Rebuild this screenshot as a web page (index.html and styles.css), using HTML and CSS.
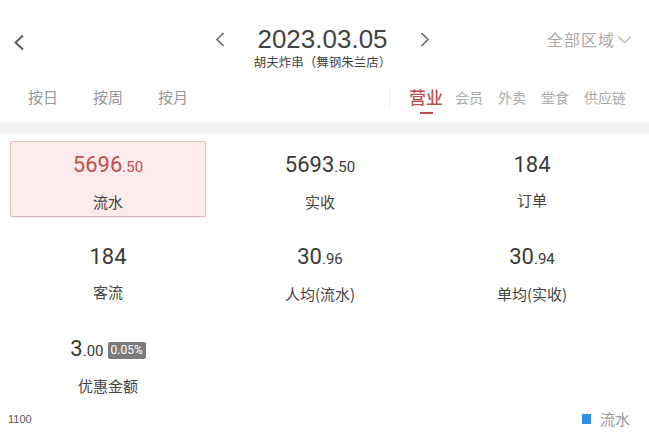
FILE: index.html
```html
<!DOCTYPE html>
<html lang="zh-CN">
<head>
    <meta charset="UTF-8">
    <meta name="viewport" content="width=device-width, initial-scale=1.0">
    <title>营业数据</title>
    <link rel="stylesheet" href="styles.css">
</head>
<body>
    <div class="topbar">
        <div class="back">
            <svg width="12" height="17" viewBox="0 0 12 17"><path d="M10 1.5 L2.5 8.5 L10 15.5" fill="none" stroke="#555" stroke-width="1.8"/></svg>
        </div>
        <div class="center">
            <div class="date-row">
                <svg width="10" height="15" viewBox="0 0 10 15"><path d="M8.5 1 L2 7.5 L8.5 14" fill="none" stroke="#666" stroke-width="1.6"/></svg>
                <span class="date">2023.03.05</span>
                <svg width="10" height="15" viewBox="0 0 10 15"><path d="M1.5 1 L8 7.5 L1.5 14" fill="none" stroke="#666" stroke-width="1.6"/></svg>
            </div>
            <div class="shop">胡夫炸串（舞钢朱兰店）</div>
        </div>
        <div class="region">
            <span>全部区域</span>
            <svg width="15" height="9" viewBox="0 0 15 9"><path d="M1 1.5 L7.5 7.5 L14 1.5" fill="none" stroke="#bbb" stroke-width="1.3"/></svg>
        </div>
    </div>

    <div class="tabs">
        <div class="period">
            <span>按日</span>
            <span>按周</span>
            <span>按月</span>
        </div>
        <div class="kinds">
            <span class="kind active">营业<i class="bar"></i></span>
            <span class="kind">会员</span>
            <span class="kind">外卖</span>
            <span class="kind">堂食</span>
            <span class="kind">供应链</span>
        </div>
    </div>

    <div class="band"></div>

    <div class="metrics">
        <div class="cell selected">
            <div class="value">5696<small>.50</small></div>
            <div class="label">流水</div>
        </div>
        <div class="cell">
            <div class="value">5693<small>.50</small></div>
            <div class="label">实收</div>
        </div>
        <div class="cell">
            <div class="value">184</div>
            <div class="label">订单</div>
        </div>
        <div class="cell">
            <div class="value">184</div>
            <div class="label">客流</div>
        </div>
        <div class="cell">
            <div class="value">30<small>.96</small></div>
            <div class="label">人均(流水)</div>
        </div>
        <div class="cell">
            <div class="value">30<small>.94</small></div>
            <div class="label">单均(实收)</div>
        </div>
        <div class="cell">
            <div class="value">3<small>.00</small><span class="badge">0.05%</span></div>
            <div class="label">优惠金额</div>
        </div>
    </div>

    <div class="chart-foot">
        <span class="axis">1100</span>
        <span class="legend"><i class="dot"></i>流水</span>
    </div>
</body>
</html>
```

FILE: styles.css
```css
body {
    margin: 0;
    font-family: "Noto Sans CJK SC", "Noto Sans", sans-serif;
    color: #333;
    background: #fff;
}

.topbar {
    display: grid;
    grid-template-columns: 1fr auto 1fr;
    align-items: start;
    padding: 25px 17px 0 13px;
}
.back {
    padding-top: 7px;
}
.center {
    display: flex;
    flex-direction: column;
    align-items: center;
}
.date-row {
    display: flex;
    align-items: center;
    gap: 32px;
}
.date {
    font-family: "Liberation Sans", Arial, sans-serif;
    font-size: 26px;
    line-height: 29px;
    color: #444;
}
.shop {
    font-size: 12.5px;
    line-height: 16px;
    color: #444;
}
.region {
    justify-self: end;
    display: flex;
    align-items: center;
    gap: 2px;
    padding-top: 3px;
    font-size: 16px;
    line-height: 22px;
    color: #aaa;
    letter-spacing: 1px;
}

.tabs {
    display: flex;
    justify-content: space-between;
    align-items: flex-start;
    height: 52px;
    padding: 17px 23px 0 28px;
    box-sizing: border-box;
}
.period {
    display: flex;
    gap: 35px;
    font-size: 15px;
    line-height: 20px;
    color: #999;
}
.kinds {
    display: flex;
    align-items: flex-start;
    gap: 15px;
    border-left: 1px solid #eee;
    padding-left: 19px;
    height: 20px;
}
.kind {
    font-size: 14px;
    line-height: 20px;
    color: #aaa;
}
.kind.active {
    display: flex;
    flex-direction: column;
    align-items: center;
    gap: 5px;
    margin-right: -3px;
    font-size: 17px;
    font-weight: 500;
    color: #b8514e;
}
.bar {
    width: 13px;
    height: 2px;
    background: #b8514e;
}

.band {
    height: 12px;
    background: #f1f1f1;
}

.metrics {
    display: grid;
    grid-template-columns: repeat(3, 196px);
    column-gap: 16px;
    row-gap: 16px;
    padding: 7px 10px 0;
}
.cell {
    height: 76px;
    box-sizing: border-box;
    padding-top: 10px;
    text-align: center;
    border: 1px solid transparent;
    border-radius: 2px;
}
.cell.selected {
    background: #fdeaea;
    border-color: #dcbcbc;
    box-shadow: 0 1px 1px rgba(0, 0, 0, 0.08);
}
.value {
    display: flex;
    justify-content: center;
    align-items: baseline;
    font-family: Roboto, "Liberation Sans", sans-serif;
    font-size: 22px;
    line-height: 26px;
    color: #3a3a3a;
}
.value small {
    font-size: 15px;
}
.selected .value {
    color: #c0504d;
}
.badge {
    margin-left: 4px;
    padding: 0 3px;
    border-radius: 2px;
    background: #7b7b7b;
    color: #fff;
    font-size: 12px;
    line-height: 17px;
    align-self: center;
}
.label {
    margin-top: 12px;
    font-size: 15px;
    line-height: 20px;
    color: #444;
}

.chart-foot {
    display: flex;
    justify-content: space-between;
    align-items: center;
    padding: 7px 19px 0 8px;
}
.axis {
    font-family: "Liberation Sans", Arial, sans-serif;
    font-size: 11px;
    color: #555;
}
.legend {
    display: flex;
    align-items: center;
    gap: 9px;
    font-size: 15px;
    color: #999;
}
.dot {
    width: 9px;
    height: 10px;
    background: #2f8fea;
}
```
